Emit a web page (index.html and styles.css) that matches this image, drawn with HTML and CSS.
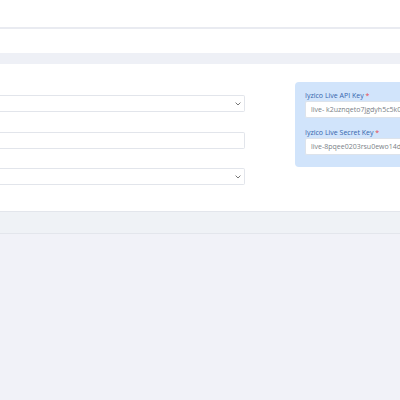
FILE: index.html
```html
<!DOCTYPE html>
<html>
<head>
<meta charset="utf-8">
<link rel="stylesheet" href="styles.css">
</head>
<body>
<header class="topbar"></header>
<div class="subbar"></div>
<div class="gap"></div>
<section class="card">
  <div class="card-body">
    <div class="left-col">
      <div class="control select">
        <svg class="chev" width="6" height="4" viewBox="0 0 6 4"><path d="M0.6 0.6 L3 3 L5.4 0.6" fill="none" stroke="#777" stroke-width="1"/></svg>
      </div>
      <div class="control"></div>
      <div class="control select">
        <svg class="chev" width="6" height="4" viewBox="0 0 6 4"><path d="M0.6 0.6 L3 3 L5.4 0.6" fill="none" stroke="#777" stroke-width="1"/></svg>
      </div>
    </div>
    <div class="keys">
      <label class="key-label">Iyzico Live API Key <span class="req">*</span></label>
      <div class="key-input">live- k2uznqeto7jgdyh5c5k0</div>
      <label class="key-label second">Iyzico Live Secret Key <span class="req">*</span></label>
      <div class="key-input">live-8pqee0203rsu0ewo14df</div>
    </div>
  </div>
  <div class="card-footer"></div>
</section>
</body>
</html>
```

FILE: styles.css
```css
html, body {
  margin: 0;
  padding: 0;
}
body {
  background: #f1f2f8;
  font-family: "Open Sans", "Noto Sans", sans-serif;
  width: 400px;
  overflow: hidden;
}
.topbar {
  height: 27px;
  background: #ffffff;
  border-bottom: 2px solid #e9ebf1;
}
.subbar {
  height: 24px;
  background: #ffffff;
}
.gap {
  height: 11px;
  background: #eef0f6;
}
.card {
  background: #ffffff;
}
.card-body {
  display: grid;
  grid-template-columns: 245px 105px;
  column-gap: 50px;
  padding-top: 18px;
  height: 129px;
}
.left-col {
  padding-top: 13px;
  display: flex;
  flex-direction: column;
  gap: 19.5px;
}
.control {
  height: 15px;
  border: 1px solid #e2e5eb;
  border-left: none;
  border-radius: 0 2px 2px 0;
  background: #ffffff;
  display: flex;
  align-items: center;
  justify-content: flex-end;
  padding-right: 3px;
}
.chev {
  display: block;
}
.keys {
  background: #d1e4fb;
  border-radius: 4px 0 0 4px;
  padding: 8px 0 12px 10px;
  align-self: start;
  height: 65px;
  overflow: hidden;
}
.key-label {
  display: block;
  font-size: 7px;
  line-height: 11px;
  color: #3464ad;
  white-space: nowrap;
}
.key-label.second {
  margin-top: 9px;
}
.req {
  color: #e5484d;
}
.key-input {
  height: 15px;
  border: 1px solid #dde3eb;
  border-right: none;
  border-radius: 2px 0 0 2px;
  background: #ffffff;
  font-size: 7px;
  line-height: 15px;
  color: #7a7f87;
  padding-left: 5px;
  white-space: nowrap;
  overflow: hidden;
}
.card-footer {
  height: 21px;
  background: #eff2f6;
  border-top: 1px solid #e3e6ec;
  border-bottom: 1px solid #e3e6ec;
}
```
